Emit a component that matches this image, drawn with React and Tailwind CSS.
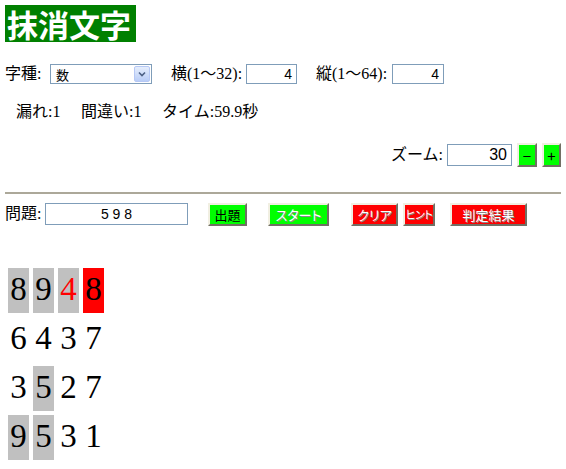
import React from "react";

const serif = "font-['Liberation_Serif','Noto_Sans_CJK_JP',serif]";
const sans = "font-['Liberation_Sans','Noto_Sans_CJK_JP',sans-serif]";
const cjk = "font-['Noto_Sans_CJK_JP',sans-serif]";

function Btn({ w, h = "h-[23px]", size = "text-[13px]", bg, text, children }) {
  return (
    <button
      className={`${h} ${w} ${bg} ${text} ${cjk} ${size} leading-none whitespace-nowrap p-0 overflow-visible [font-feature-settings:'palt'] flex items-center justify-center border-2 border-t-[#f1efe2] border-l-[#f1efe2] border-r-[#716f64] border-b-[#716f64]`}
    >
      {children}
    </button>
  );
}

const grid = [
  [["8", "g"], ["9", "g"], ["4", "gr"], ["8", "r"]],
  [["6", ""], ["4", ""], ["3", ""], ["7", ""]],
  [["3", ""], ["5", "g"], ["2", ""], ["7", ""]],
  [["9", "g"], ["5", "g"], ["3", ""], ["1", ""]],
];

function Cell({ d, s }) {
  let cls = "";
  if (s === "g") cls = "bg-[#c0c0c0] text-black";
  else if (s === "gr") cls = "bg-[#c0c0c0] text-[#ff0000]";
  else if (s === "r") cls = "bg-[#ff0000] text-black";
  else cls = "text-black";
  return (
    <div
      className={`w-[21px] h-[45px] flex items-center justify-center font-['Liberation_Serif',serif] text-[33px] leading-none pb-[3px] ${cls}`}
    >
      {d}
    </div>
  );
}

export default function App() {
  return (
    <div className={`w-[566px] h-[469px] bg-white px-[5px] pt-[5px] ${serif} text-[16px] text-black overflow-hidden`}>
      <div className={`w-[131px] h-[37px] bg-[#008000] text-white font-bold text-[31px] leading-[37px] pl-[2px] ${cjk}`}>
        抹消文字
      </div>

      <div className="mt-[22px] flex items-center h-[20px]">
        <span className="w-[45px] whitespace-nowrap">字種:</span>
        <div className="w-[102px] h-[20px] border border-[#7f9db9] bg-white flex items-center justify-between">
          <span className={`${cjk} text-[13px] pl-[5px] leading-none`}>数</span>
          <div className="w-[16px] h-[16px] mr-[1px] rounded-[2px] border border-[#b6c8f5] bg-gradient-to-b from-[#e6eefc] to-[#b9cdf7] flex items-center justify-center">
            <svg width="8" height="6" viewBox="0 0 8 6">
              <path d="M1 1.5 L4 4.5 L7 1.5" stroke="#4d6185" strokeWidth="1.6" fill="none" />
            </svg>
          </div>
        </div>
        <span className="ml-[19px] w-[75px] whitespace-nowrap">横(1〜32):</span>
        <div className={`w-[51px] h-[20px] border border-[#7f9db9] flex items-center justify-end pr-[4px] ${sans} text-[14px]`}>4</div>
        <span className="ml-[19px] w-[76px] whitespace-nowrap">縦(1〜64):</span>
        <div className={`w-[52px] h-[20px] border border-[#7f9db9] flex items-center justify-end pr-[4px] ${sans} text-[14px]`}>4</div>
      </div>

      <div className="mt-[18px] flex items-center h-[20px] pl-[11px]">
        <span className="w-[65px] whitespace-nowrap">漏れ:1</span>
        <span className="w-[81px] whitespace-nowrap">間違い:1</span>
        <span className="whitespace-nowrap">タイム:59.9秒</span>
      </div>

      <div className="mt-[21px] flex items-center justify-end h-[24px]">
        <span className="whitespace-nowrap mr-[4px]">ズーム:</span>
        <div className={`w-[65px] h-[22px] border border-[#7f9db9] flex items-center justify-end pr-[4px] ${sans} text-[16px]`}>30</div>
        <div className="ml-[5px]">
          <Btn w="w-[20px]" h="h-[24px]" size="text-[15px]" bg="bg-[#00ff00]" text="text-black">−</Btn>
        </div>
        <div className="ml-[5px]">
          <Btn w="w-[19px]" h="h-[24px]" size="text-[15px]" bg="bg-[#00ff00]" text="text-black">+</Btn>
        </div>
      </div>

      <div className="mt-[25px] h-[2px] bg-[#aca899]" />

      <div className="mt-[8px] flex items-center h-[24px]">
        <span className="w-[40px] whitespace-nowrap">問題:</span>
        <div className={`w-[143px] h-[22px] border border-[#7f9db9] flex items-center justify-center ${sans} text-[14px]`}>5 9 8</div>
        <div className="ml-[20px]">
          <Btn w="w-[39px]" bg="bg-[#00ff00]" text="text-black">出題</Btn>
        </div>
        <div className="ml-[21px]">
          <Btn w="w-[61px]" bg="bg-[#00ff00]" text="text-white [text-shadow:1px_1px_0_#8a8a8a]">スタート</Btn>
        </div>
        <div className="ml-[22px]">
          <Btn w="w-[47px]" bg="bg-[#ff0000]" text="text-white [text-shadow:1px_1px_0_#8a8a8a]">クリア</Btn>
        </div>
        <div className="ml-[5px]">
          <Btn w="w-[32px]" size="text-[11px] tracking-[-0.5px]" bg="bg-[#ff0000]" text="text-white [text-shadow:1px_1px_0_#8a8a8a]">ヒント</Btn>
        </div>
        <div className="ml-[15px]">
          <Btn w="w-[77px]" bg="bg-[#ff0000]" text="text-white [text-shadow:1px_1px_0_#8a8a8a]">判定結果</Btn>
        </div>
      </div>

      <div className="mt-[42px] ml-[3px] flex flex-col gap-[4px]">
        {grid.map((row, i) => (
          <div key={i} className="flex gap-[4px]">
            {row.map(([d, s], j) => (
              <Cell key={j} d={d} s={s} />
            ))}
          </div>
        ))}
      </div>
    </div>
  );
}
